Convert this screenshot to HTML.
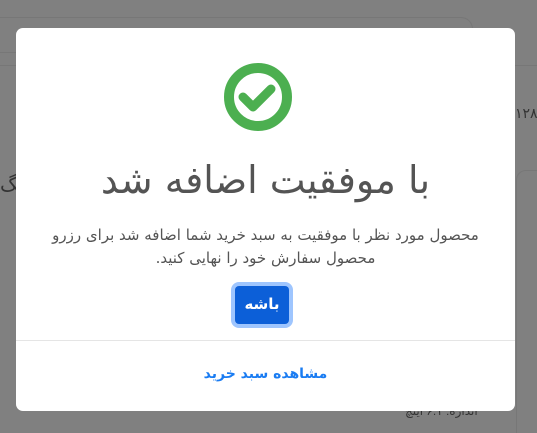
<!DOCTYPE html>
<html><head><meta charset="utf-8"><style>
html,body{margin:0;padding:0;width:537px;height:433px;overflow:hidden;background:#808080;font-family:"Liberation Sans","DejaVu Sans",sans-serif;position:relative}
.bg1{position:absolute;left:0;top:17px;width:472px;height:34px;border:1px solid #777;border-radius:0 12px 0 0;border-left:none}
.bg2{position:absolute;left:0;top:65px;width:537px;height:1px;background:#777}
.bgt{position:absolute;color:#333;font-size:14px}
.modal{position:absolute;left:16px;top:28px;width:499px;height:383px;background:#fff;border-radius:7px}
.title{position:absolute;left:0;right:0;top:130px;text-align:center;font-size:38px;color:#545454;direction:rtl;font-family:"DejaVu Sans",sans-serif}
.body{position:absolute;left:20px;right:20px;top:196px;text-align:center;font-size:15px;line-height:23px;color:#545454;direction:rtl;font-family:"DejaVu Sans",sans-serif}
.btn{position:absolute;left:219px;top:258px;width:54px;height:38px;background:#0c5fd8;border-radius:4px;box-shadow:0 0 0 4px #9ec5fe;color:#fff;font-size:15px;font-weight:bold;text-align:center;line-height:37px;font-family:"DejaVu Sans",sans-serif}
.hr{position:absolute;left:0;right:0;top:312px;height:1px;background:#e5e5e5}
.link{position:absolute;left:0;right:0;top:338px;text-align:center;color:#1a7cf2;font-weight:bold;font-size:14px;direction:rtl;font-family:"DejaVu Sans",sans-serif}
</style></head><body>
<div class="bg1"></div><div class="bg2"></div>
<div class="bgt" style="left:515px;top:105px">۱۲۸</div>
<div class="bgt" style="left:0;top:172px;font-size:20px">یگ</div>
<div style="position:absolute;left:516px;top:170px;width:30px;height:262px;border:1px solid #777;border-radius:10px 0 0 0"></div>
<div class="bgt" style="left:405px;top:404px;font-size:12px">اندازه: ۶.۱ اینچ</div>
<div class="modal">
<svg style="position:absolute;left:207px;top:35px" width="70" height="70" viewBox="0 0 70 70">
<circle cx="35" cy="34" r="29" fill="none" stroke="#4caf50" stroke-width="10"/>
<path d="M20 34 L30 44 L48 26" fill="none" stroke="#4caf50" stroke-width="9" stroke-linecap="round" stroke-linejoin="round"/>
</svg>
<div class="title">با موفقیت اضافه شد</div>
<div class="body">محصول مورد نظر با موفقیت به سبد خرید شما اضافه شد برای رزرو<br>محصول سفارش خود را نهایی کنید.</div>
<div class="btn">باشه</div>
<div class="hr"></div>
<div class="link">مشاهده سبد خرید</div>
</div>
</body></html>
